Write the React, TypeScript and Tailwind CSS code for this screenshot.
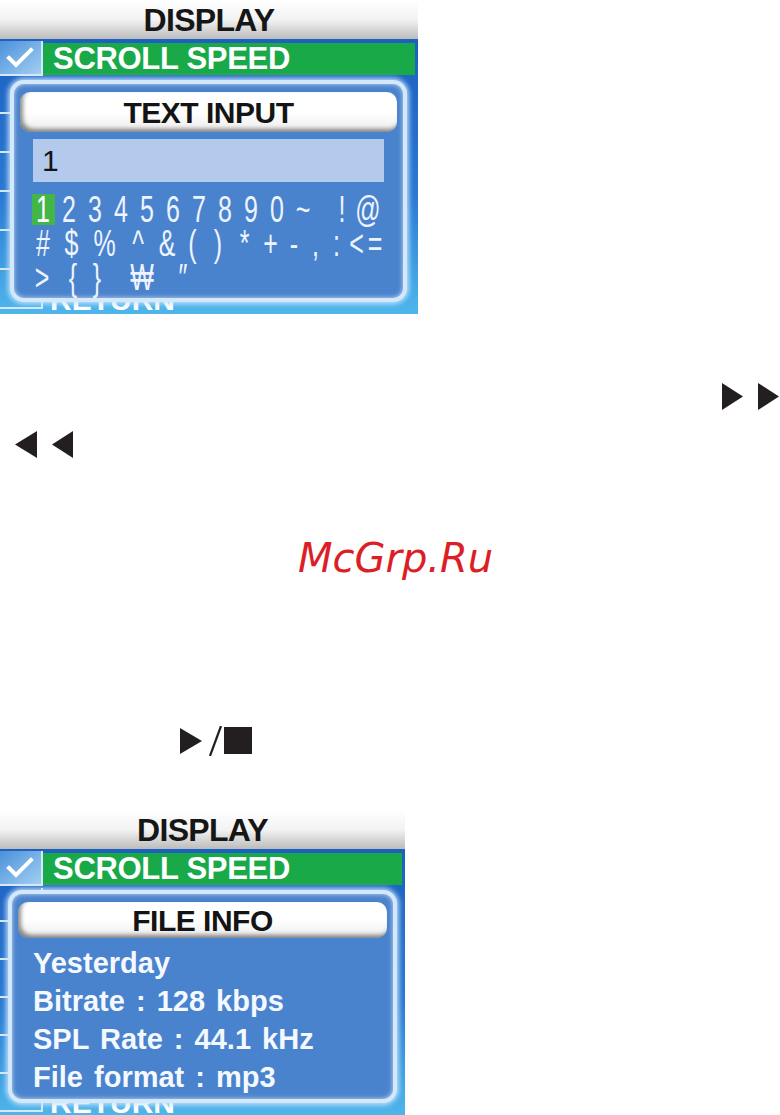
import React from "react";

type Cell = { c: string; w: string; hot?: boolean; gap?: boolean };

const keyRows: Cell[][] = [
  [
    { c: "1", w: "w-[26px]", hot: true },
    { c: "2", w: "w-[26px]" },
    { c: "3", w: "w-[26px]" },
    { c: "4", w: "w-[26px]" },
    { c: "5", w: "w-[26px]" },
    { c: "6", w: "w-[26px]" },
    { c: "7", w: "w-[26px]" },
    { c: "8", w: "w-[26px]" },
    { c: "9", w: "w-[26px]" },
    { c: "0", w: "w-[26px]" },
    { c: "~", w: "w-[26px]" },
    { c: "", w: "w-[13px]", gap: true },
    { c: "!", w: "w-[26px]" },
    { c: "@", w: "w-[26px]" },
  ],
  [
    { c: "#", w: "w-[26px]" },
    { c: "$", w: "w-[31px]" },
    { c: "%", w: "w-[35px]" },
    { c: "^", w: "w-[32px]" },
    { c: "&", w: "w-[26px]" },
    { c: "(", w: "w-[25px]" },
    { c: ")", w: "w-[26px]" },
    { c: "*", w: "w-[27px]" },
    { c: "+", w: "w-[25px]" },
    { c: "-", w: "w-[22px]" },
    { c: ",", w: "w-[21px]" },
    { c: ":", w: "w-[21px]" },
    { c: "<", w: "w-[19px]" },
    { c: "=", w: "w-[18px]" },
  ],
  [
    { c: ">", w: "w-[24px]" },
    { c: "", w: "w-[7px]", gap: true },
    { c: "{", w: "w-[24px]" },
    { c: "}", w: "w-[24px]" },
    { c: "", w: "w-[21px]", gap: true },
    { c: "₩", w: "w-[24px]" },
    { c: "", w: "w-[17px]", gap: true },
    { c: "″", w: "w-[24px]" },
  ],
];

const Check = () => (
  <svg width="43" height="35" viewBox="0 0 43 35" className="block">
    <polyline
      points="9,17 16,24 31,9"
      fill="none"
      stroke="white"
      strokeWidth="4"
      strokeLinecap="square"
    />
  </svg>
);

const Pill = ({ h, text }: { h: string; text: string }) => (
  <div
    className={`${h} rounded-[10px] bg-linear-to-b from-white via-white to-[#ececec] shadow-[inset_3px_-3px_4px_rgba(0,0,0,0.45)] flex items-center justify-center text-[30px] font-bold text-[#141414] tracking-[-0.5px]`}
  >
    {text}
  </div>
);

type ScreenProps = {
  width: string;
  height: string;
  rowH: string;
  children: React.ReactNode;
};

const Screen = ({ width, height, rowH, children }: ScreenProps) => {
  const labels = ["", "", "", "", "", "RETURN"];
  return (
    <div className={`relative overflow-hidden ${width} ${height}`}>
      {/* header */}
      <div className="h-[39px] bg-linear-to-b from-white via-[#f3f3f3] to-[#bcbcbc] flex items-center justify-center text-[32px] font-bold text-[#161616] tracking-[-0.7px]">
        DISPLAY
      </div>

      {/* menu list */}
      <div className="h-full bg-linear-to-b from-[#1d60c0] via-[#2b79d2] to-[#5ccbf3]">
        <div className={`flex items-start ${rowH}`}>
          <div className="mt-[2px] w-[43px] h-[35px] border-b-2 border-r-2 border-[#d4e9fb] bg-linear-to-br from-[#4a90da] to-[#a2cff2]">
            <Check />
          </div>
          <div className="mt-[4px] mr-[3px] flex-1 h-[32px] bg-[#19a948] flex items-center pl-[10px] text-white font-bold text-[31px] tracking-[-0.3px]">
            SCROLL SPEED
          </div>
        </div>
        {labels.map((l, i) => (
          <div key={i} className={`flex items-end pb-[3px] ${rowH}`}>
            <div className="w-[43px] h-[34px] border-b-2 border-r-2 border-[#d4e9fb]" />
            <span className="ml-[7px] text-[30px] leading-none font-bold text-white translate-y-[6px]">
              {l}
            </span>
          </div>
        ))}
      </div>

      {children}
    </div>
  );
};

const popupFrame =
  "absolute top-[80px] rounded-[14px] border-4 border-[#d3e8fa] bg-[#4a83cd] shadow-[0_0_5px_2px_rgba(200,230,255,0.9),inset_0_0_5px_rgba(255,255,255,0.7)] px-[6px] pt-[8px]";

const App = () => {
  return (
    <div className="w-[780px] h-[1115px] overflow-hidden bg-white font-['Liberation_Sans',Arial,sans-serif]">
      {/* Text input screen */}
      <Screen width="w-[418px]" height="h-[314px]" rowH="h-[39px]">
        <div className={`${popupFrame} left-[10px] w-[397px] h-[222px]`}>
          <Pill h="h-[40px]" text="TEXT INPUT" />
          <div className="mx-[13px] mt-[7px] h-[43px] bg-[#b3caec] flex items-center pl-[9px] text-[30px] text-[#151515]">
            1
          </div>
          <div className="mt-[10px] ml-[10px]">
            {keyRows.map((row, r) => (
              <div key={r} className="flex items-center h-[34px]">
                {row.map((k, i) =>
                  k.gap ? (
                    <div key={i} className={`flex-none ${k.w}`} />
                  ) : (
                    <div key={i} className={`flex-none flex justify-center ${k.w}`}>
                      {k.hot ? (
                        <span className="w-[23px] h-[31px] bg-[#43b649] flex items-center justify-center">
                          <span className="inline-block scale-y-[1.45] text-[25px] leading-none text-white">
                            {k.c}
                          </span>
                        </span>
                      ) : (
                        <span className="inline-block scale-y-[1.45] text-[25px] leading-none text-[#eef4ff]">
                          {k.c}
                        </span>
                      )}
                    </div>
                  )
                )}
              </div>
            ))}
          </div>
        </div>
      </Screen>

      {/* fast forward */}
      <div className="flex justify-end mt-[69px]">
        <svg width="58" height="27" viewBox="0 0 58 27" className="block">
          <path d="M0 0 L21 13.5 L0 27 Z" fill="#231f20" />
          <path d="M36 0 L57 13.5 L36 27 Z" fill="#231f20" />
        </svg>
      </div>

      {/* rewind */}
      <div className="mt-[21px] pl-[15px]">
        <svg width="58" height="27" viewBox="0 0 58 27" className="block">
          <path d="M22 0 L0 13.5 L22 27 Z" fill="#231f20" />
          <path d="M58 0 L37 13.5 L58 27 Z" fill="#231f20" />
        </svg>
      </div>

      {/* watermark */}
      <div className="mt-[80px] pl-[298px] h-[40px] text-[40px] leading-[40px] italic text-[#dc1f26] font-['DejaVu_Sans',sans-serif]">
        McGrp.Ru
      </div>

      {/* play / stop */}
      <div className="mt-[148px] pl-[180px]">
        <svg width="72" height="30" viewBox="0 0 72 30" className="block">
          <path d="M0 2 L22 15 L0 28 Z" fill="#231f20" />
          <line x1="30" y1="30" x2="41" y2="0" stroke="#231f20" strokeWidth="2.2" />
          <rect x="44" y="1" width="28" height="27" fill="#231f20" />
        </svg>
      </div>

      {/* File info screen */}
      <div className="mt-[54px]">
        <Screen width="w-[405px]" height="h-[305px]" rowH="h-[38px]">
          <div className={`${popupFrame} left-[8px] w-[389px] h-[213px]`}>
            <Pill h="h-[36px]" text="FILE INFO" />
            <div className="mt-[6px] pl-[15px] text-[29px] leading-[38px] font-bold text-[#f4f8ff] [word-spacing:3px]">
              <div>Yesterday</div>
              <div>Bitrate : 128 kbps</div>
              <div>SPL Rate : 44.1 kHz</div>
              <div>File format : mp3</div>
            </div>
          </div>
        </Screen>
      </div>
    </div>
  );
};

export default App;
